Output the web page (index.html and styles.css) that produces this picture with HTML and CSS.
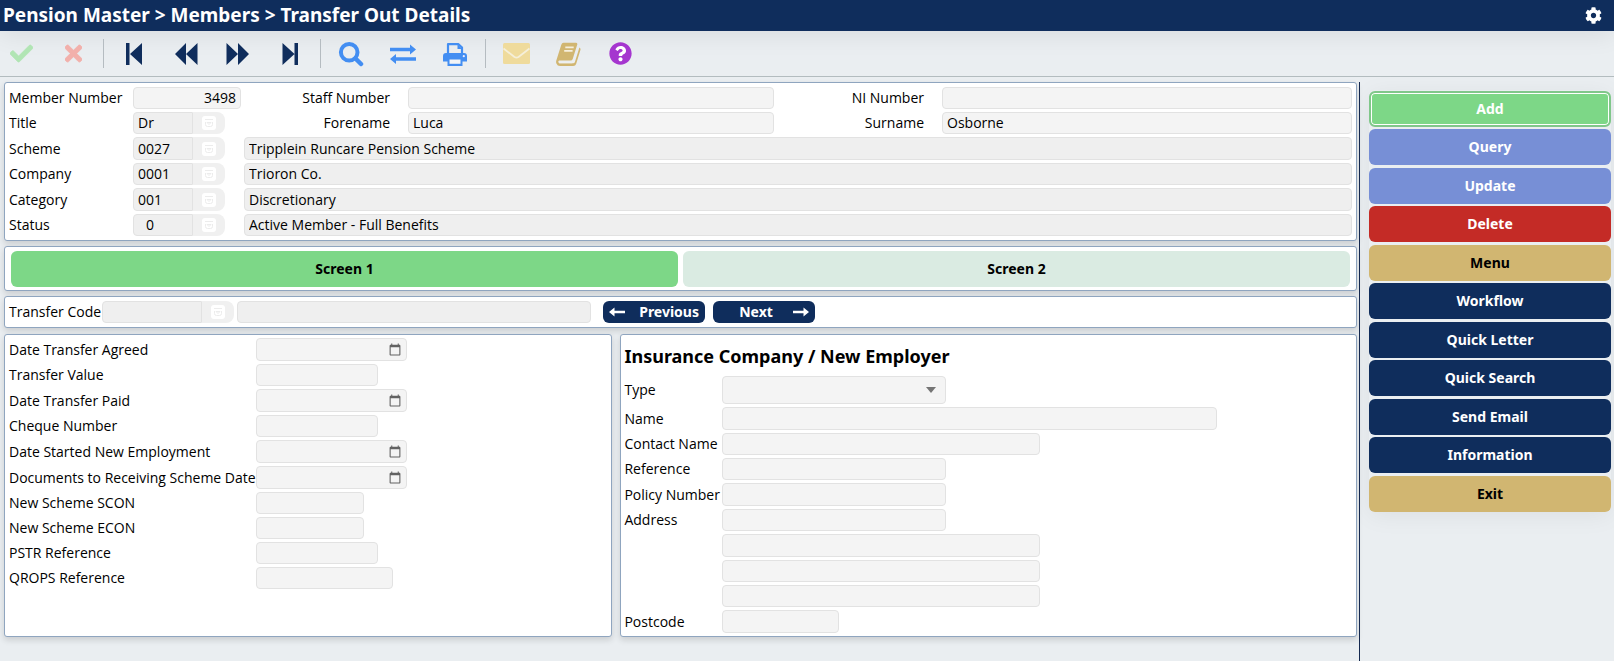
FILE: index.html
```html
<!DOCTYPE html>
<html lang="en">
<head>
<meta charset="utf-8">
<meta name="viewport" content="width=device-width, initial-scale=1">
<title>Pension Master - Transfer Out Details</title>
<link rel="stylesheet" href="styles.css">
</head>
<body>
<svg class="sprite" aria-hidden="true">
  <symbol id="lookup" viewBox="0 0 14 14">
    <rect width="14" height="14" rx="3" fill="#fff"/>
    <path d="M3 3.500h8" fill="none" stroke="#ececec"/>
    <path d="M3.500 6v2.500q0 2 2 2h3q2 0 2-2V6M5 6.500h4L7 8.500z" fill="none" stroke="#ececec"/>
  </symbol>
</svg>

<header class="titlebar">
  <h1 class="titlebar-text">Pension Master &gt; Members &gt; Transfer Out Details</h1>
  <button class="icon-button gear" type="button" aria-label="Settings">
    <svg width="17" height="17" viewBox="0 0 512 512" fill="currentColor"><path d="M487.4 315.7l-42.6-24.6c4.3-23.2 4.3-47 0-70.2l42.6-24.6c4.9-2.8 7.1-8.6 5.5-14-11.1-35.6-30-67.8-54.7-94.6-3.8-4.1-10-5.1-14.8-2.3L380.8 110c-17.9-15.4-38.5-27.3-60.8-35.1V25.800c0-5.600-3.900-10.500-9.400-11.700-36.700-8.200-74.300-7.800-109.200 0-5.500 1.200-9.400 6.100-9.400 11.700V75c-22.200 7.900-42.800 19.800-60.800 35.100L88.700 85.500c-4.900-2.800-11-1.900-14.800 2.300-24.700 26.700-43.600 58.900-54.700 94.600-1.700 5.400.6 11.200 5.500 14L67.300 221c-4.300 23.200-4.300 47 0 70.200l-42.600 24.600c-4.900 2.800-7.100 8.600-5.500 14 11.100 35.600 30 67.800 54.700 94.600 3.800 4.100 10 5.100 14.800 2.300l42.600-24.600c17.900 15.400 38.500 27.300 60.800 35.100v49.200c0 5.600 3.900 10.500 9.400 11.700 36.700 8.200 74.300 7.800 109.200 0 5.500-1.200 9.400-6.100 9.400-11.700v-49.200c22.200-7.900 42.800-19.800 60.800-35.100l42.600 24.600c4.900 2.800 11 1.900 14.800-2.300 24.700-26.700 43.600-58.900 54.700-94.600 1.500-5.500-.7-11.300-5.600-14.100zM256 336c-44.100 0-80-35.900-80-80s35.900-80 80-80 80 35.900 80 80-35.900 80-80 80z"/></svg>
  </button>
</header>

<nav class="toolbar" aria-label="Record tools">
  <button class="icon-button tool confirm" type="button" aria-label="Confirm"><svg width="23" height="23" viewBox="0 0 512 512" fill="currentColor" stroke="currentColor" stroke-width="16"><path d="M173.898 439.404l-166.400-166.400c-9.997-9.997-9.997-26.206 0-36.204l36.203-36.204c9.997-9.998 26.207-9.998 36.204 0L192 312.690 432.095 72.596c9.997-9.997 26.207-9.997 36.204 0l36.203 36.204c9.997 9.997 9.997 26.206 0 36.204l-294.400 294.401c-9.998 9.997-26.207 9.997-36.204-.001z"/></svg></button>
  <button class="icon-button tool cancel" type="button" aria-label="Cancel"><svg width="17" height="25" viewBox="0 0 352 512" fill="currentColor" stroke="currentColor" stroke-width="16"><path d="M242.720 256l100.070-100.070c12.280-12.280 12.280-32.190 0-44.480l-22.240-22.240c-12.280-12.280-32.190-12.280-44.480 0L176 189.280 75.930 89.210c-12.280-12.280-32.190-12.280-44.480 0L9.210 111.450c-12.280 12.280-12.280 32.190 0 44.480L109.280 256 9.210 356.070c-12.280 12.280-12.280 32.190 0 44.480l22.240 22.240c12.280 12.280 32.200 12.280 44.480 0L176 322.720l100.070 100.070c12.280 12.280 32.200 12.280 44.480 0l22.240-22.240c12.280-12.280 12.280-32.190 0-44.480L242.720 256z"/></svg></button>
  <span class="separator"></span>
  <button class="icon-button tool" type="button" aria-label="First"><svg width="24" height="24" viewBox="0 0 24 24" fill="currentColor"><path d="M4 1h3.500v22H4zM20 1v22L8 12z"/></svg></button>
  <button class="icon-button tool" type="button" aria-label="Back"><svg width="24" height="24" viewBox="0 0 24 24" fill="currentColor"><path d="M12 1v22L1 12zM23.500 1v22L12 12z"/></svg></button>
  <button class="icon-button tool" type="button" aria-label="Forward"><svg width="24" height="24" viewBox="0 0 24 24" fill="currentColor"><path d="M.5 1v22l11.500-11zM12 1v22l11-11z"/></svg></button>
  <button class="icon-button tool" type="button" aria-label="Last"><svg width="24" height="24" viewBox="0 0 24 24" fill="currentColor"><path d="M16.500 1H20v22h-3.500zM4.500 1v22l12-11z"/></svg></button>
  <span class="separator"></span>
  <button class="icon-button tool blue" type="button" aria-label="Search"><svg width="26" height="26" viewBox="0 0 26 26" fill="none" stroke="currentColor"><circle cx="11.200" cy="11.200" r="8.300" stroke-width="4"/><path d="M17.500 17.500l5.500 5.500" stroke-width="4.500" stroke-linecap="round"/></svg></button>
  <button class="icon-button tool blue" type="button" aria-label="Swap"><svg width="26" height="24" viewBox="0 0 26 24" fill="currentColor"><path d="M0 5.700h20V2.500l6 5-6 5V9.200H0zM26 15.200H6V12l-6 5 6 5v-3.300h20z"/></svg></button>
  <button class="icon-button tool blue" type="button" aria-label="Print"><svg width="24" height="24" viewBox="0 0 24 24"><path d="M5 11V2.200h10.500L19 5.500V11" fill="none" stroke="currentColor" stroke-width="2.200" stroke-linejoin="round"/><path d="M14.500 2v5H19M3 11h18a3 3 0 0 1 3 3v5.500h-4.500V24h-15v-4.500H0V14a3 3 0 0 1 3-3z" fill="currentColor"/><path d="M6.500 17.500h11v4.300h-11z" fill="#f2f4f6"/><circle cx="20.800" cy="14.200" r="1.100" fill="#eef"/></svg></button>
  <span class="separator"></span>
  <button class="icon-button tool mail" type="button" aria-label="Email"><svg width="27" height="21" viewBox="0 0 27 21"><rect width="27" height="21" rx="1.500" fill="#efdb9c"/><path d="M.5 5.500l11 8.500q2 1.300 4 0l11-8.500" fill="none" stroke="#f5efd9" stroke-width="1.800"/></svg></button>
  <button class="icon-button tool book" type="button" aria-label="Notes"><svg width="25" height="24" viewBox="0 0 25 24"><path d="M7.500.8h12.300q2 0 1.400 2L16.700 17q-.5 1.500-2.200 1.500H3.200q-1.500.8-.5 2.200.5.600 1.500.600h13q1.300 0 1.800-1.500l4.400-14.300q1.500 1 1 2.500l-4.200 13.700Q19.500 24 17.200 24H4Q1.500 24 .4 21.500-.2 20 .4 18.300L5.300 2.700Q5.900.8 7.500.8z" fill="currentColor"/><path d="M9.300 5.300h8.400M8.200 8.800h8.400" stroke="#f6efdd" stroke-width="1.700"/><path d="M3 20.500h12.800q1.800 0 2.300-1.700" fill="none" stroke="#eef0ef" stroke-width="1.600"/></svg></button>
  <button class="icon-button tool help" type="button" aria-label="Help"><svg width="23" height="23" viewBox="0 0 512 512" fill="currentColor"><circle cx="256" cy="256" r="200" fill="#fff"/><path d="M504 256c0 136.997-111.043 248-248 248S8 392.997 8 256C8 119.083 119.043 8 256 8s248 111.083 248 248zM262.655 90c-54.497 0-89.255 22.957-116.549 63.758-3.536 5.286-2.353 12.415 2.715 16.258l34.699 26.310c5.205 3.947 12.621 3.008 16.665-2.122 17.864-22.658 30.113-35.797 57.303-35.797 20.429 0 45.698 13.148 45.698 32.958 0 14.976-12.363 22.667-32.534 33.976C247.128 238.528 216 254.941 216 296v4c0 6.627 5.373 12 12 12h56c6.627 0 12-5.373 12-12v-1.333c0-28.462 83.186-29.647 83.186-106.667 0-58.002-60.165-102-116.531-102zM256 338c-25.365 0-46 20.635-46 46 0 25.364 20.635 46 46 46s46-20.636 46-46c0-25.365-20.635-46-46-46z"/></svg></button>
</nav>

<div class="workspace">
  <main class="content">
    <section class="panel member">
      <div class="member-names">
        <label for="member-number">Member Number</label>
        <input class="field number" id="member-number" value="3498" readonly>
        <label class="end" for="staff-number">Staff Number</label>
        <input class="field" id="staff-number" readonly>
        <label class="end" for="ni-number">NI Number</label>
        <input class="field" id="ni-number" readonly>

        <label for="title">Title</label>
        <div class="code">
          <input class="field code-input" id="title" value="Dr" readonly>
          <button class="code-button" type="button" aria-label="Look up title"><svg width="14" height="14"><use href="#lookup"/></svg></button>
        </div>
        <label class="end" for="forename">Forename</label>
        <input class="field" id="forename" value="Luca" readonly>
        <label class="end" for="surname">Surname</label>
        <input class="field" id="surname" value="Osborne" readonly>
      </div>
      <div class="member-codes">
        <label for="scheme">Scheme</label>
        <div class="code tall">
          <input class="field code-input" id="scheme" value="0027" readonly>
          <button class="code-button" type="button" aria-label="Look up scheme"><svg width="14" height="14"><use href="#lookup"/></svg></button>
        </div>
        <input class="field muted tall" aria-label="Scheme name" value="Tripplein Runcare Pension Scheme" readonly>

        <label for="company">Company</label>
        <div class="code">
          <input class="field code-input" id="company" value="0001" readonly>
          <button class="code-button" type="button" aria-label="Look up company"><svg width="14" height="14"><use href="#lookup"/></svg></button>
        </div>
        <input class="field muted" aria-label="Company name" value="Trioron Co." readonly>

        <label for="category">Category</label>
        <div class="code tall">
          <input class="field code-input" id="category" value="001" readonly>
          <button class="code-button" type="button" aria-label="Look up category"><svg width="14" height="14"><use href="#lookup"/></svg></button>
        </div>
        <input class="field muted tall" aria-label="Category name" value="Discretionary" readonly>

        <label for="status">Status</label>
        <div class="code">
          <input class="field code-input indent" id="status" value="0" readonly>
          <button class="code-button" type="button" aria-label="Look up status"><svg width="14" height="14"><use href="#lookup"/></svg></button>
        </div>
        <input class="field muted" aria-label="Status name" value="Active Member - Full Benefits" readonly>
      </div>
    </section>

    <section class="panel tabs">
      <button class="button tab current" type="button">Screen 1</button>
      <button class="button tab" type="button">Screen 2</button>
    </section>

    <section class="panel transfer">
      <label class="transfer-label" for="transfer-code">Transfer Code</label>
      <div class="code transfer-code">
        <input class="field code-input" id="transfer-code" readonly>
        <button class="code-button" type="button" aria-label="Look up transfer code"><svg width="14" height="14"><use href="#lookup"/></svg></button>
      </div>
      <input class="field muted transfer-name" aria-label="Transfer name" readonly>
      <div class="pager">
        <button class="pager-button" type="button"><svg width="16" height="10" viewBox="0 0 16 10" fill="currentColor"><path d="M0 5l5.500-4.500v3.200H16v2.600H5.500v3.200z"/></svg><span class="pager-text">Previous</span></button>
        <button class="pager-button" type="button"><span class="pager-text">Next</span><svg width="16" height="10" viewBox="0 0 16 10" fill="currentColor"><path d="M16 5L10.500.5v3.200H0v2.600h10.500v3.200z"/></svg></button>
      </div>
    </section>

    <div class="details">
      <section class="panel form dates">
        <label for="agreed">Date Transfer Agreed</label><input class="field date" id="agreed" type="date">
        <label for="value">Transfer Value</label><input class="field w-m" id="value" readonly>
        <label for="paid">Date Transfer Paid</label><input class="field date" id="paid" type="date">
        <label for="cheque">Cheque Number</label><input class="field w-m" id="cheque" readonly>
        <label for="started">Date Started New Employment</label><input class="field date" id="started" type="date">
        <label for="documents">Documents to Receiving Scheme Date</label><input class="field date" id="documents" type="date">
        <label for="scon">New Scheme SCON</label><input class="field w-s" id="scon" readonly>
        <label for="econ">New Scheme ECON</label><input class="field w-s" id="econ" readonly>
        <label for="pstr">PSTR Reference</label><input class="field w-m" id="pstr" readonly>
        <label for="qrops">QROPS Reference</label><input class="field w-l" id="qrops" readonly>
      </section>

      <section class="panel form employer">
        <h2 class="employer-title">Insurance Company / New Employer</h2>
        <label for="type">Type</label>
        <div class="select-box">
          <select class="field type-select" id="type"><option></option></select>
          <svg class="select-arrow" width="10" height="6" viewBox="0 0 10 6"><path d="M0 0h10L5 6z" fill="#757575"/></svg>
        </div>
        <label for="name">Name</label><input class="field w-name tall" id="name" readonly>
        <label for="contact">Contact Name</label><input class="field w-line" id="contact" readonly>
        <label for="reference">Reference</label><input class="field w-ref" id="reference" readonly>
        <label for="policy">Policy Number</label><input class="field w-ref tall" id="policy" readonly>
        <label for="address">Address</label><input class="field w-ref" id="address" readonly>
        <input class="field w-line line tall" aria-label="Address line 2" readonly>
        <input class="field w-line line" aria-label="Address line 3" readonly>
        <input class="field w-line line" aria-label="Address line 4" readonly>
        <label for="postcode">Postcode</label><input class="field w-post tall" id="postcode" readonly>
      </section>
    </div>
  </main>

  <aside class="sidebar">
    <div class="actions">
      <button class="button action add" type="button">Add</button>
      <button class="button action soft" type="button">Query</button>
      <button class="button action soft" type="button">Update</button>
      <button class="button action danger" type="button">Delete</button>
      <button class="button action gold" type="button">Menu</button>
      <button class="button action" type="button">Workflow</button>
      <button class="button action" type="button">Quick Letter</button>
      <button class="button action" type="button">Quick Search</button>
      <button class="button action" type="button">Send Email</button>
      <button class="button action" type="button">Information</button>
      <button class="button action gold" type="button">Exit</button>
    </div>
  </aside>
</div>
</body>
</html>
```
FILE: styles.css
```css
:root {
  --navy: #0f2d5c;
  --green: #7dd787;
  --gold: #d1b671;
  --edge: #8fa5bf;
  --page: #eaeef1;
  --heading-font: "Noto Sans", "Open Sans", sans-serif;
}

* { box-sizing: border-box; }

body {
  margin: 0;
  min-height: 100vh;
  display: flex;
  flex-direction: column;
  background: var(--page);
  color: #000;
  font: 14px/20px "Open Sans", "Noto Sans", sans-serif;
}

button, input, select { font: inherit; color: inherit; margin: 0; }
button { border: 0; padding: 0; background: none; cursor: pointer; }
label { white-space: nowrap; }
.sprite { display: none; }
svg { display: block; }

.titlebar {
  display: flex;
  align-items: center;
  justify-content: space-between;
  height: 31px;
  padding: 0 12px 0 3px;
  background: var(--navy);
  color: #fff;
  box-shadow: 0 4px 24px rgba(0, 0, 0, 0.08);
}
.titlebar-text {
  margin: 0;
  padding-bottom: 2px;
  font: 700 19px/28px var(--heading-font);
}

.icon-button { display: flex; align-items: center; justify-content: center; color: var(--navy); }
.gear { color: #fff; }

.toolbar {
  display: flex;
  align-items: center;
  gap: 10px;
  height: 46px;
  border-bottom: 1px solid #b3bcbf;
}
.tool { width: 42px; height: 36px; }
.separator { width: 1px; height: 29px; margin: 0 -1px; background: #b5bcc1; }
.confirm { color: #b1e5b4; }
.cancel { color: #f2b0ab; }
.blue { color: #438ef2; }
.book { color: #d1b671; }
.help { color: #a536cf; }

.workspace {
  flex: 1;
  display: grid;
  grid-template-columns: minmax(0, 1fr) 255px;
  margin-top: 5px;
}
.content { display: flex; flex-direction: column; gap: 5px; padding: 0 2px 8px 4px; }

.panel {
  background: #fff;
  border: 1px solid var(--edge);
  border-radius: 3px;
  box-shadow: 0 3px 6px rgba(0, 0, 0, 0.14);
}

.field {
  width: 100%;
  min-width: 0;
  height: 22px;
  padding: 0 4px 1px;
  border: 1px solid #e2e2e2;
  border-radius: 4px;
  background: #f4f4f4;
  outline: none;
}
.muted, .code-input { background: #efefef; }
.field.number { text-align: right; }
.end { text-align: right; padding-right: 18px; }

.member { display: flex; flex-direction: column; gap: 3px; padding: 4px; }
.member-names, .member-codes { display: grid; row-gap: 3px; align-items: center; }
.member-names { grid-template-columns: 124px 108px 167fr 366fr 168fr 410fr; }
.member-codes { grid-template-columns: 124px 111px 1fr; }

.code { display: flex; width: 92px; height: 22px; }
.code-input { flex: 1; height: 100%; border-radius: 4px 0 0 4px; }
.code-button {
  display: flex;
  align-items: center;
  justify-content: center;
  width: 32px;
  background: #f0f0f0;
  border-radius: 0 8px 8px 0;
}
.indent { padding-left: 12px; }
.code.tall, .field.tall { height: 23px; }

.tabs { display: grid; grid-template-columns: 1fr 1fr; gap: 5px; padding: 4px 6px 3px; }
.button {
  height: 36px;
  border-radius: 6px;
  font-family: var(--heading-font);
  font-weight: 700;
  text-align: center;
}
.tab { background: #daebe2; }
.current { background: var(--green); }

.transfer { display: flex; align-items: center; gap: 3px; padding: 4px; }
.transfer-label { width: 90px; }
.transfer-code { width: 132px; }
.transfer-name { width: 354px; }
.pager { display: flex; gap: 8px; padding-left: 9px; }
.pager-button {
  display: flex;
  align-items: center;
  width: 102px;
  height: 22px;
  padding: 0 6px;
  border-radius: 6px;
  background: var(--navy);
  color: #fff;
  font-family: var(--heading-font);
  font-weight: 700;
}
.pager-text { flex: 1; text-align: center; }
.pager-button svg + .pager-text { text-align: right; }

.details {
  display: grid;
  grid-template-columns: 608fr 736fr;
  gap: 8px;
  margin-top: 1px;
}
.form { display: grid; row-gap: 3px; align-items: center; align-content: start; padding: 3px 4px; }
.dates { grid-template-columns: 247px 1fr; }
.employer { grid-template-columns: 98px 1fr; padding: 3px; }
.employer-title {
  grid-column: 1 / -1;
  margin: 0;
  padding: 5px 0 4px;
  font: 700 18px/26px var(--heading-font);
}
.line { grid-column: 2; }

.date { width: 151px; height: 23px; padding: 0 4px 0 4px; }
.date::-webkit-datetime-edit { visibility: hidden; }
.date::-webkit-calendar-picker-indicator { width: 14px; height: 14px; padding: 0; opacity: 0.6; }
.w-s { width: 108px; }
.w-m { width: 122px; }
.w-l { width: 137px; }
.w-post { width: 117px; }
.w-ref { width: 224px; }
.w-line { width: 318px; }
.w-name { width: 495px; }

.select-box { position: relative; width: 224px; }
.type-select { display: block; height: 28px; appearance: none; }
.select-arrow { position: absolute; right: 10px; top: 11px; pointer-events: none; }

.sidebar { padding: 8px 3px 8px 9px; border-left: 1px solid #14284f; }
.actions {
  display: flex;
  flex-direction: column;
  gap: 2px;
  border-radius: 6px;
  box-shadow: 0 4px 24px rgba(0, 0, 0, 0.06);
}
.action { background: var(--navy); color: #fff; }
.action:nth-child(odd) { margin-top: 1px; }
.soft { background: #778fd6; }
.danger { background: #c42b26; }
.gold { background: var(--gold); color: #000; }
.add {
  background: var(--green);
  border: 2px solid #80c78a;
  box-shadow: inset 0 0 0 1px #fff;
}
```
